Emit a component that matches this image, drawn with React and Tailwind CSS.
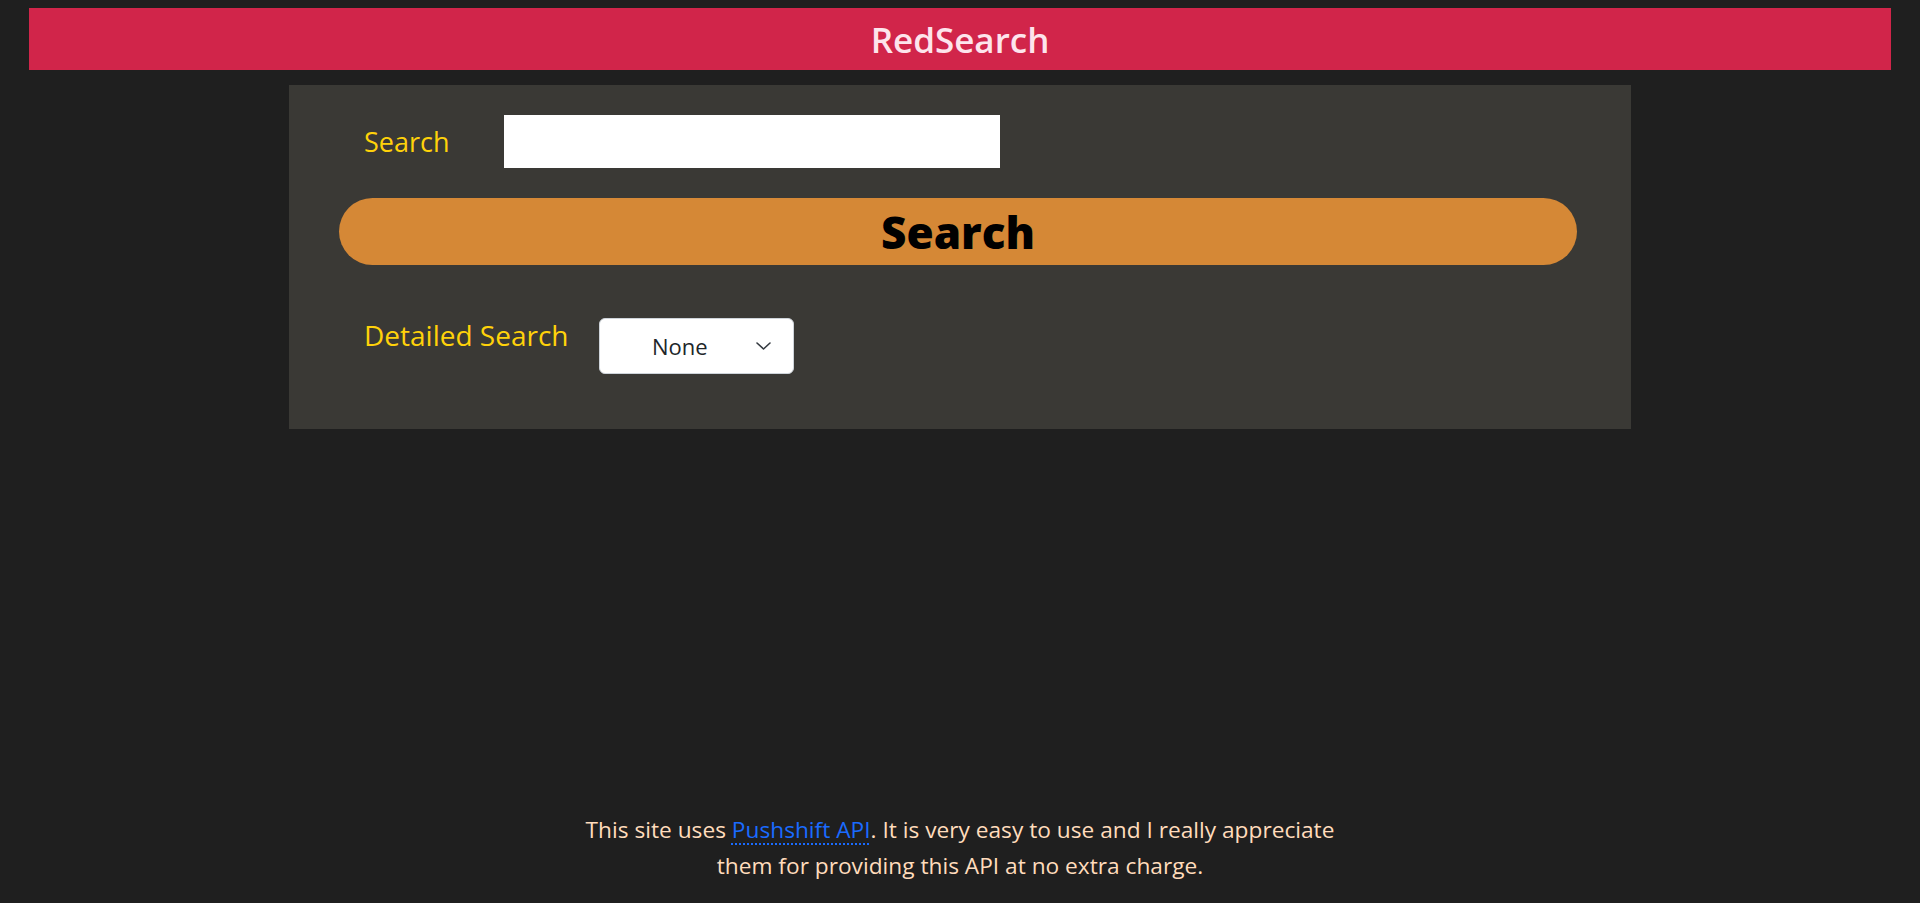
import React, { useState } from "react";

// RedSearch — landing search page (Pushshift-backed reddit search form)

const FONT = { fontFamily: '"Open Sans", "Noto Sans", sans-serif' };

function Chevron() {
  return (
    <svg width="15" height="8" viewBox="0 0 15 8" fill="none" className="shrink-0">
      <path d="M1 1l6.5 6 6.5-6" stroke="#343a40" strokeWidth="1.6" strokeLinecap="round" strokeLinejoin="round" />
    </svg>
  );
}

export default function App() {
  const [query, setQuery] = useState("");
  const [mode, setMode] = useState("None");

  return (
    <div className="flex min-h-screen flex-col bg-[#1f1f1f]" style={FONT}>
      <header className="mx-[29px] mt-[8px] flex h-[62px] items-center justify-center bg-[#d1254a]">
        <h1 className="text-[35px] font-semibold leading-none text-[#fde4ec]">RedSearch</h1>
      </header>

      <main className="mx-auto mt-[15px] flex h-[344px] w-[1342px] flex-col bg-[#3a3935]">
        <div className="ml-[75px] mt-[30px] flex items-center">
          <label className="w-[140px] text-[27px] leading-none text-[#ffd20a]">Search</label>
          <input
            type="text"
            value={query}
            onChange={(e) => setQuery(e.target.value)}
            className="h-[53px] w-[496px] bg-white px-2 text-[20px] text-black outline-none"
          />
        </div>

        <button
          type="button"
          className="ml-[50px] mt-[30px] flex h-[67px] w-[1238px] items-center justify-center rounded-full bg-[#d58836] text-[44px] font-extrabold leading-none text-black"
        >
          Search
        </button>

        <div className="ml-[75px] mt-[53px] flex items-start">
          <label className="-mt-[3px] w-[235px] text-[28px] leading-[40px] text-[#ffd20a]">Detailed Search</label>
          <div className="flex h-[56px] w-[195px] items-center rounded-[6px] border border-[#ced4da] bg-white pl-[52px] pr-[22px]">
            <span className="flex-1 text-[22px] text-[#212529]">{mode}</span>
            <Chevron />
          </div>
        </div>
      </main>

      <footer className="mx-auto mt-auto w-[780px] pb-[19px] text-center text-[22.7px] leading-[36px] text-[#ffdcbc]">
        This site uses{" "}
        <a href="#" className="text-[#1a6bff] underline decoration-dotted decoration-2 underline-offset-[5px]">
          Pushshift API
        </a>
        . It is very easy to use and I really appreciate them for providing this API at no extra charge.
      </footer>
    </div>
  );
}
